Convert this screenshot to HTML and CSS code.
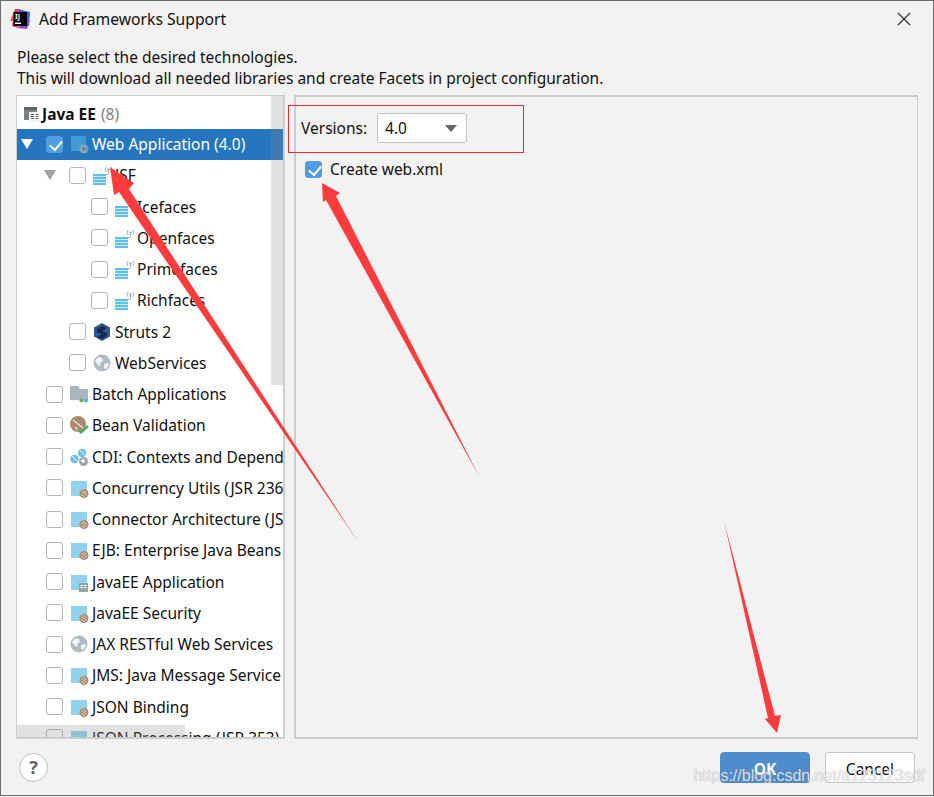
FILE: index.html
```html
<!DOCTYPE html>
<html lang="en">
  <head>
    <meta charset="UTF-8" />
    <meta name="viewport" content="width=device-width, initial-scale=1.0" />
    <title>Add Frameworks Support</title>
    <link rel="stylesheet" href="styles.css">
  </head>
  <body>
    <!-- shared tree icons -->
    <svg class="defs" width="0" height="0">
      <symbol id="i-jsf" viewBox="0 0 18 18" overflow="visible">
        <rect x="0" y="8" width="13" height="11" fill="#5fbfe8"/>
        <path d="M0 10.500h13M0 13.500h13M0 16.500h13" stroke="#c9ebf8" stroke-width="1"/>
        <path d="M13 8.500h1.500c1 0 1-1 1-2V4" fill="none" stroke="#a3aeb5" stroke-width="1"/>
        <circle cx="15.500" cy="3.500" r="1.200" fill="#a3aeb5"/>
        <path d="M13.200 1a3.600 3.600 0 0 0 0 5M17.800 1a3.600 3.600 0 0 1 0 5" fill="none" stroke="#a3aeb5"/>
      </symbol>
      <symbol id="i-module" viewBox="0 0 18 18" overflow="visible">
        <rect x="1" y="2" width="16" height="15" fill="#8fd3ee"/>
        <circle cx="14" cy="14.500" r="4.500" fill="#a98a6d"/>
        <path d="M11 12.500l6 4M11 15.500l4 2.500M12.500 11l4.500 3" stroke="#e9dfd5" stroke-width="0.800"/>
      </symbol>
      <symbol id="i-globe" viewBox="0 0 18 18">
        <circle cx="9" cy="9" r="8.500" fill="#b0bcc4"/>
        <path d="M5 3l4 1 1 3-3 2 1 3-3-1-3-4zM11 10l4-1 1 2-3 4-2-1z" fill="#f2f4f5"/>
      </symbol>
    </svg>

    <div class="dialog">
      <div class="titlebar">
        <svg class="app-logo" width="20" height="20" viewBox="0 0 20 20">
          <path d="M0 12L5 0l8 1-2 11z" fill="#f0642c"/>
          <path d="M6 0l14 3-1 14-7-2z" fill="#3a5fd8"/>
          <path d="M2 17L5 0l5 0-2 19z" fill="#e8378a"/>
          <path d="M7 19l10 1 3-9z" fill="#9a3fd0"/>
          <rect x="3.500" y="3" width="13.500" height="14" fill="#000"/>
          <text x="5" y="10" class="logo-text">IJ</text>
          <rect x="5" y="13.500" width="6" height="1.500" fill="#fff"/>
        </svg>
        <span class="title">Add Frameworks Support</span>
        <svg class="close" width="14" height="14" viewBox="0 0 14 14">
          <path d="M1 1l12 12M13 1L1 13" stroke="#333" stroke-width="1.200"/>
        </svg>
      </div>

      <p class="intro">Please select the desired technologies.<br>This will download all needed libraries and create Facets in project configuration.</p>

      <div class="panes">
        <div class="tree">
          <div class="group">
            <svg class="group-icon" width="18" height="16" viewBox="0 0 18 16">
              <path d="M1 1h13v13H1z" fill="#7a8288"/>
              <path d="M1 1h13v3H1z" fill="#5e666c"/>
              <rect x="6" y="6" width="11" height="10" fill="#f4f4f4"/>
              <path d="M8 8h3v1H8zM8 10h3v1H8zM8 12h3v1H8zM12.500 8h3v1h-3zM12.500 10h3v1h-3zM12.500 12h3v1h-3z" fill="#666"/>
            </svg>
            <b>Java EE</b><span class="count">(8)</span>
          </div>

          <div class="row selected">
            <span class="caret white"></span>
            <span class="box on"></span>
            <svg class="icon" viewBox="0 0 18 18">
              <rect x="1" y="1" width="15" height="15" fill="#3f9ad6"/>
              <circle cx="14" cy="14" r="4.500" fill="#8fa3b3"/>
              <path d="M12 12l3 1-1 3zM16 13l1.500 1-1.500 2z" fill="#2675bf"/>
            </svg>
            <span>Web Application (4.0)</span>
          </div>
          <div class="row l1">
            <span class="caret"></span>
            <span class="box"></span>
            <svg class="icon"><use href="#i-jsf"/></svg>
            <span>JSF</span>
          </div>
          <div class="row l2"><span class="box"></span><svg class="icon"><use href="#i-jsf"/></svg><span>Icefaces</span></div>
          <div class="row l2"><span class="box"></span><svg class="icon"><use href="#i-jsf"/></svg><span>Openfaces</span></div>
          <div class="row l2"><span class="box"></span><svg class="icon"><use href="#i-jsf"/></svg><span>Primefaces</span></div>
          <div class="row l2"><span class="box"></span><svg class="icon"><use href="#i-jsf"/></svg><span>Richfaces</span></div>
          <div class="row l1">
            <span class="box"></span>
            <svg class="icon" viewBox="0 0 18 18">
              <path d="M9 0l8 4.500v9L9 18l-8-4.500v-9z" fill="#2f5597"/>
              <path d="M4 6l5-3 5 2-5 3 5 2v3l-5 3-5-2 5-3-5-2z" fill="#16294f"/>
            </svg>
            <span>Struts 2</span>
          </div>
          <div class="row l1"><span class="box"></span><svg class="icon"><use href="#i-globe"/></svg><span>WebServices</span></div>
          <div class="row">
            <span class="box"></span>
            <svg class="icon" viewBox="0 0 18 18">
              <path d="M0 1h8l2 3h8v11H0z" fill="#aab6bd"/>
              <circle cx="11.500" cy="15.500" r="2" fill="#62b543"/>
              <circle cx="16" cy="15.500" r="2" fill="#40b6e0"/>
            </svg>
            <span>Batch Applications</span>
          </div>
          <div class="row">
            <span class="box"></span>
            <svg class="icon" viewBox="0 0 18 18">
              <circle cx="8" cy="8" r="8" fill="#a98a6d"/>
              <path d="M3 4l10 8M5 11l3 3" stroke="#efe7df" stroke-width="1.200"/>
              <path d="M8 13l3 3.500 7-6.500" fill="none" stroke="#59a869" stroke-width="2.600"/>
            </svg>
            <span>Bean Validation</span>
          </div>
          <div class="row">
            <span class="box"></span>
            <svg class="icon" viewBox="0 0 18 18">
              <circle cx="4.500" cy="11" r="4.200" fill="#6fbfe6"/>
              <circle cx="12" cy="5" r="4.200" fill="#6fbfe6"/>
              <path d="M2 8l5 5M9.500 2l5 5" stroke="#fff"/>
              <circle cx="13.500" cy="13.500" r="4.500" fill="#9aa7b0"/>
              <path d="M11 12l3-1 1 3-3 1z" fill="#fff"/>
            </svg>
            <span>CDI: Contexts and Dependency Injection</span>
          </div>
          <div class="row"><span class="box"></span><svg class="icon"><use href="#i-module"/></svg><span>Concurrency Utils (JSR 236)</span></div>
          <div class="row"><span class="box"></span><svg class="icon"><use href="#i-module"/></svg><span>Connector Architecture (JSR 322)</span></div>
          <div class="row"><span class="box"></span><svg class="icon"><use href="#i-module"/></svg><span>EJB: Enterprise Java Beans</span></div>
          <div class="row">
            <span class="box"></span>
            <svg class="icon" viewBox="0 0 18 18">
              <rect x="1" y="2" width="16" height="15" fill="#8fd3ee"/>
              <rect x="9" y="10" width="9" height="9" fill="#9aa5ab"/>
              <path d="M10.500 12h2.500v1h-2.500zM10.500 14h2.500v1h-2.500zM14 12h2.500v1H14zM14 14h2.500v1H14z" fill="#fff"/>
            </svg>
            <span>JavaEE Application</span>
          </div>
          <div class="row"><span class="box"></span><svg class="icon"><use href="#i-module"/></svg><span>JavaEE Security</span></div>
          <div class="row"><span class="box"></span><svg class="icon"><use href="#i-globe"/></svg><span>JAX RESTful Web Services</span></div>
          <div class="row"><span class="box"></span><svg class="icon"><use href="#i-module"/></svg><span>JMS: Java Message Service</span></div>
          <div class="row"><span class="box"></span><svg class="icon"><use href="#i-module"/></svg><span>JSON Binding</span></div>
          <div class="row"><span class="box"></span><svg class="icon"><use href="#i-module"/></svg><span>JSON Processing (JSR 353)</span></div>

          <div class="scroll-v"></div>
          <div class="scroll-h"></div>
        </div>

        <div class="settings">
          <div class="version-row">
            <span>Versions:</span>
            <div class="combo"><span>4.0</span><i class="combo-arrow"></i></div>
          </div>
          <label class="check-row"><span class="box on big"></span>Create web.xml</label>
        </div>
      </div>

      <div class="footer">
        <div class="help">?</div>
        <div class="buttons">
          <div class="btn primary">OK</div>
          <div class="btn">Cancel</div>
        </div>
      </div>
    </div>

    <!-- annotations drawn on top of the screenshot -->
    <svg class="marks" width="934" height="797" viewBox="0 0 934 797">
      <rect x="288.500" y="105.500" width="235" height="47" fill="none" stroke="#f0282d"/>
      <path d="M358 541.500L129 189l5-6-24-16 4 28 5-3z" fill="#fa3c3c"/>
      <path d="M480 478L336 196l4-3-18-10 1 19 3-2z" fill="#fa3c3c"/>
      <path d="M724 521l51 195 6-1-4 18-12-14 3-1z" fill="#fa3c3c"/>
    </svg>
    <div class="watermark">https://blog.csdn.net/a123123sdf</div>
  </body>
</html>
```

FILE: styles.css
```css
* {
  box-sizing: border-box;
}

html,
body {
  margin: 0;
  height: 100%;
}

body {
  position: relative;
  overflow: hidden;
  width: 934px;
  height: 797px;
  font-family: "Noto Sans", Arial, sans-serif;
  font-size: 15.5px;
  color: #111;
  background: #f2f2f2;
}

.defs {
  position: absolute;
}

.dialog {
  display: flex;
  flex-direction: column;
  height: 796px;
  padding: 0 15px;
  border: 1px solid #6e6e6e;
}

.titlebar {
  display: flex;
  align-items: center;
  height: 36px;
  margin-left: -6px;
  margin-right: 7px;
}

.app-logo {
  flex: none;
}

.logo-text {
  font-size: 7px;
  font-weight: 700;
  fill: #fff;
}

.title {
  margin-left: 9px;
  font-size: 15.7px;
}

.close {
  margin-left: auto;
}

.intro {
  margin: 10px 0 6px 1px;
  line-height: 21px;
  font-size: 15.5px;
}

.panes {
  display: flex;
  gap: 9px;
  height: 644px;
}

.tree {
  position: relative;
  flex: none;
  width: 269px;
  overflow: hidden;
  background: #fff;
  border: 1px solid #cdcdcd;
  border-bottom-width: 2px;
  border-right-width: 2px;
}

.group {
  display: flex;
  align-items: center;
  height: 32.5px;
  padding: 4px 0 0 6px;
}

.group b {
  margin-left: 1px;
  font-weight: 700;
}

.count {
  margin-left: 5px;
  color: #808080;
}

.group-icon {
  flex: none;
}

.row {
  display: flex;
  align-items: center;
  height: 31.25px;
  padding-left: 29px;
  white-space: nowrap;
}

.row.l1 {
  padding-left: 52px;
}

.row.l2 {
  padding-left: 74px;
}

.row.selected {
  position: relative;
  color: #fff;
  background: #2675bf;
}

.caret {
  position: absolute;
  width: 0;
  height: 0;
  margin-left: -25px;
  border-left: 6px solid transparent;
  border-right: 6px solid transparent;
  border-top: 10px solid #a0a0a0;
}

.caret.white {
  border-top-color: #fff;
}

.box {
  flex: none;
  width: 17px;
  height: 17px;
  margin-right: 7px;
  background: #fff;
  border: 1px solid #b5b5b5;
  border-radius: 3px;
}

.box.on {
  position: relative;
  background: #4f9ee3;
  border-color: #4f9ee3;
}

.box.on::after {
  content: "";
  position: absolute;
  left: 5px;
  top: 1.500px;
  width: 5.500px;
  height: 10px;
  border-right: 2.500px solid #fff;
  border-bottom: 2.500px solid #fff;
  transform: rotate(40deg);
}

.icon {
  flex: none;
  width: 18px;
  height: 18px;
  margin-right: 4px;
  overflow: visible;
}

.scroll-v {
  position: absolute;
  top: 0;
  right: 0;
  width: 12px;
  height: 289px;
  background: rgba(140, 140, 140, 0.26);
}

.scroll-h {
  position: absolute;
  left: 0;
  bottom: 0;
  width: 168px;
  height: 12px;
  background: rgba(140, 140, 140, 0.26);
}

.settings {
  flex: 1;
  padding: 16px 0 0 5px;
  border: 1px solid #cdcdcd;
  border-bottom-width: 2px;
  border-left-width: 2px;
  border-top-width: 2px;
}

.version-row {
  display: flex;
  align-items: center;
  gap: 10px;
}

.combo {
  display: flex;
  align-items: center;
  justify-content: space-between;
  width: 90px;
  height: 30px;
  padding: 0 9px 0 7px;
  background: #fff;
  border: 1px solid #c4c4c4;
  border-radius: 3px;
}

.combo-arrow {
  width: 0;
  height: 0;
  border-left: 6px solid transparent;
  border-right: 6px solid transparent;
  border-top: 7px solid #666;
}

.check-row {
  display: flex;
  align-items: center;
  margin: 15px 0 0 4px;
}

.check-row .box {
  margin-right: 8px;
}

.footer {
  display: flex;
  align-items: flex-start;
  justify-content: space-between;
  padding: 13px 3px 0 3px;
}

.help {
  width: 29px;
  height: 29px;
  margin-top: 1px;
  font-size: 18px;
  font-weight: 700;
  line-height: 26px;
  text-align: center;
  color: #666;
  background: #fff;
  border: 1px solid #c0c0c0;
  border-radius: 50%;
}

.buttons {
  display: flex;
  gap: 15px;
}

.btn {
  width: 90px;
  height: 31px;
  line-height: 32px;
  text-align: center;
  background: #fff;
  border: 1px solid #c4c4c4;
  border-radius: 4px;
}

.btn.primary {
  font-weight: 700;
  color: #fff;
  background: #4f8ccb;
  border-color: #4f8ccb;
}

.marks {
  position: absolute;
  top: 0;
  left: 0;
}

.watermark {
  position: absolute;
  right: 9px;
  top: 767px;
  font-family: "Liberation Sans", Arial, sans-serif;
  font-size: 16px;
  color: rgba(255, 255, 255, 0.75);
  text-shadow: 0 0 1px rgba(120, 120, 120, 0.7);
}
```
